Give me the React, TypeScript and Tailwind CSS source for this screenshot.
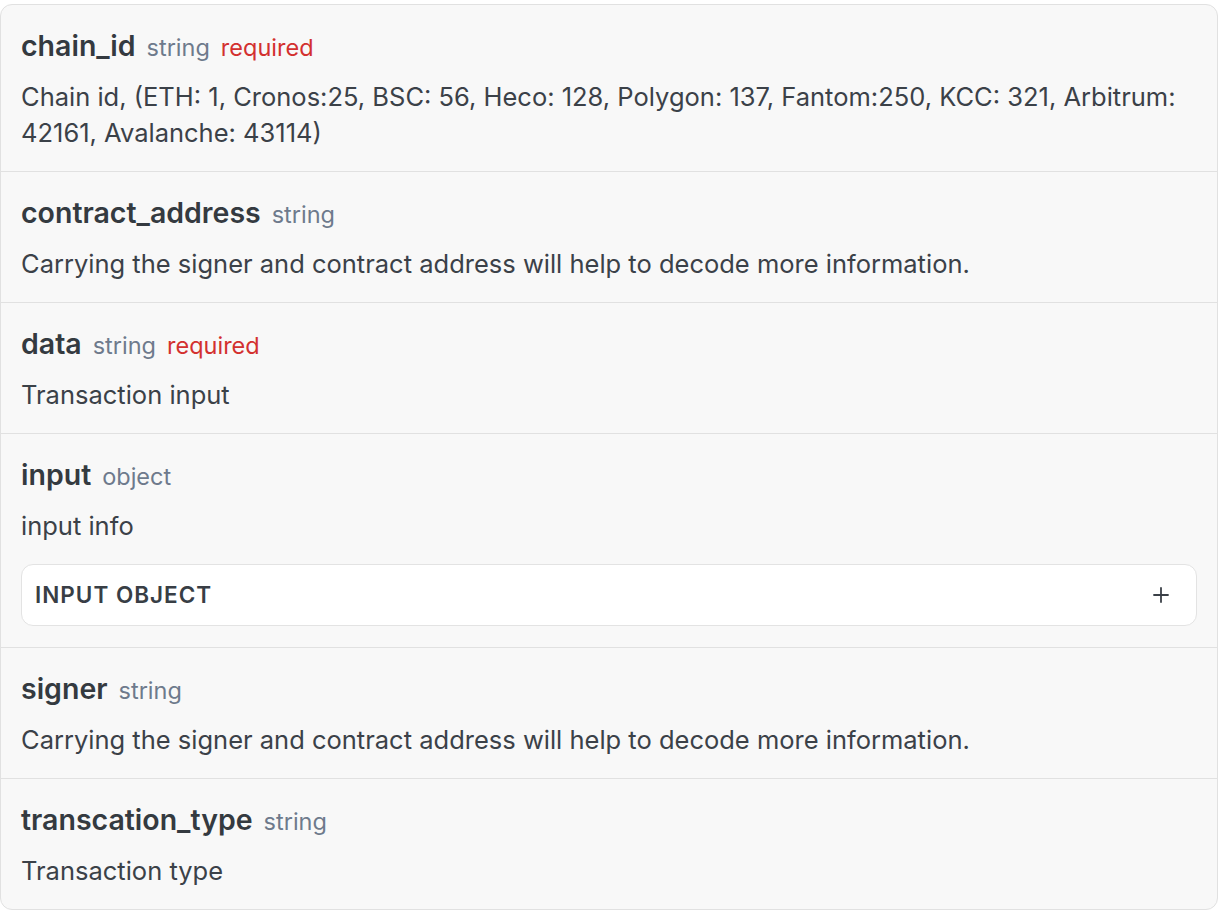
import { Plus } from "lucide-react";

type Param = {
  name: string;
  type: string;
  required?: boolean;
  description: string;
  child?: string;
};

const params: Param[] = [
  {
    name: "chain_id",
    type: "string",
    required: true,
    description:
      "Chain id, (ETH: 1, Cronos:25, BSC: 56, Heco: 128, Polygon: 137, Fantom:250, KCC: 321, Arbitrum: 42161, Avalanche: 43114)",
  },
  {
    name: "contract_address",
    type: "string",
    description: "Carrying the signer and contract address will help to decode more information.",
  },
  { name: "data", type: "string", required: true, description: "Transaction input" },
  { name: "input", type: "object", description: "input info", child: "INPUT OBJECT" },
  {
    name: "signer",
    type: "string",
    description: "Carrying the signer and contract address will help to decode more information.",
  },
  { name: "transcation_type", type: "string", description: "Transaction type" },
];

export default function App() {
  return (
    <div className="min-h-[914px] bg-white pt-[4px] font-['Inter',sans-serif]">
      <div className="w-[1218px] overflow-hidden rounded-[12px] border border-[#e1e1e1] bg-[#f8f8f8]">
        {params.map((p, i) => (
          <div
            key={p.name}
            className={`px-[20px] pt-[25px] ${p.child ? "pb-[21px]" : "pb-[20px]"} ${i > 0 ? "border-t border-[#e1e1e1]" : ""}`}
          >
            <div className="flex items-baseline gap-[11px] leading-[32px]">
              <span className="text-[28.5px] font-semibold text-[#343a40]">{p.name}</span>
              <span className="text-[23.5px] text-[#6e7a8c]">{p.type}</span>
              {p.required ? <span className="text-[23.5px] text-[#d3302f]">required</span> : null}
            </div>
            <p className="mt-[15px] text-[25.5px] leading-[36px] text-[#3b4148]">{p.description}</p>
            {p.child ? (
              <div className="mt-[20px] flex h-[62px] items-center justify-between rounded-[12px] border border-[#e3e3e3] bg-white pl-[13px] pr-[23px]">
                <span className="text-[22.5px] font-semibold tracking-[1px] text-[#383e45]">
                  {p.child}
                </span>
                <Plus className="h-[24px] w-[24px] text-[#3a4047]" strokeWidth={1.8} />
              </div>
            ) : null}
          </div>
        ))}
      </div>
    </div>
  );
}
